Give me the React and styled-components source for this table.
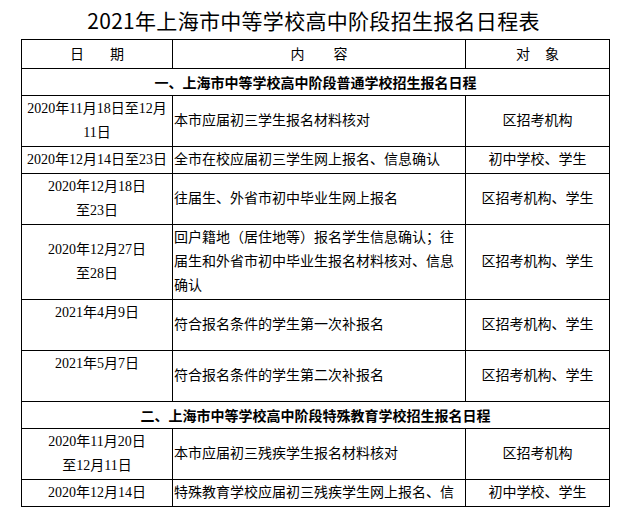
import React from "react";
import styled, { createGlobalStyle } from "styled-components";

const Global = createGlobalStyle`
  html, body { margin: 0; padding: 0; background: #fff; }
  body {
    font-family: "Liberation Serif", "Noto Sans CJK SC", serif;
    color: #000;
  }
`;

const Page = styled.div`
  width: 627px;
`;

const Title = styled.h1`
  margin: 0;
  height: 39px;
  line-height: 40px;
  text-align: center;
  font-family: "Noto Sans CJK SC", sans-serif;
  font-weight: 400;
  font-size: 21px;
  letter-spacing: 0.3px;
  color: #000;
`;

const Table = styled.table`
  margin-left: 21px;
  width: 589px;
  border-collapse: collapse;
  table-layout: fixed;
`;

const Cell = styled.td`
  border: 1px solid #000;
  padding: 1px 1px;
  font-size: 14px;
  line-height: 24px;
  color: #000;
  text-align: ${(p) => p.$align || "left"};
  vertical-align: ${(p) => p.$valign || "middle"};
  font-weight: ${(p) => (p.$bold ? 700 : 400)};
  font-family: ${(p) =>
    p.$sans ? `"Noto Sans CJK SC", sans-serif` : `"Liberation Serif", "Noto Sans CJK SC", serif`};
`;

const HeadLabel = styled.span`
  display: inline-flex;
  gap: ${(p) => p.$gap}px;
  font-family: "Noto Sans CJK SC", sans-serif;
`;

const Line = styled.span`
  display: block;
`;

const section1 = [
  {
    date: ["2020年11月18日至12月", "11日"],
    content: "本市应届初三学生报名材料核对",
    target: "区招考机构",
  },
  {
    date: ["2020年12月14日至23日"],
    content: "全市在校应届初三学生网上报名、信息确认",
    target: "初中学校、学生",
  },
  {
    date: ["2020年12月18日", "至23日"],
    content: "往届生、外省市初中毕业生网上报名",
    target: "区招考机构、学生",
  },
  {
    date: ["2020年12月27日", "至28日"],
    content:
      "回户籍地（居住地等）报名学生信息确认；往届生和外省市初中毕业生报名材料核对、信息确认",
    target: "区招考机构、学生",
  },
  {
    date: ["2021年4月9日", "\u00a0"],
    top: true,
    content: "符合报名条件的学生第一次补报名",
    target: "区招考机构、学生",
  },
  {
    date: ["2021年5月7日", "\u00a0"],
    top: true,
    content: "符合报名条件的学生第二次补报名",
    target: "区招考机构、学生",
  },
];

const section2 = [
  {
    date: ["2020年11月20日", "至12月11日"],
    content: "本市应届初三残疾学生报名材料核对",
    target: "区招考机构",
  },
  {
    date: ["2020年12月14日"],
    content: "特殊教育学校应届初三残疾学生网上报名、信",
    target: "初中学校、学生",
  },
];

function Row({ r }) {
  return (
    <tr>
      <Cell $align="center" $valign={r.top ? "top" : "middle"}>
        {r.date.map((d, i) => (
          <Line key={i}>{d}</Line>
        ))}
      </Cell>
      <Cell>{r.content}</Cell>
      <Cell $align="center">{r.target}</Cell>
    </tr>
  );
}

export default function App() {
  return (
    <Page>
      <Global />
      <Title>2021年上海市中等学校高中阶段招生报名日程表</Title>
      <Table>
        <colgroup>
          <col style={{ width: 151 }} />
          <col style={{ width: 293 }} />
          <col style={{ width: 144 }} />
        </colgroup>
        <tbody>
          <tr>
            <Cell $align="center">
              <HeadLabel $gap={26}>
                <span>日</span>
                <span>期</span>
              </HeadLabel>
            </Cell>
            <Cell $align="center">
              <HeadLabel $gap={29}>
                <span>内</span>
                <span>容</span>
              </HeadLabel>
            </Cell>
            <Cell $align="center">
              <HeadLabel $gap={15}>
                <span>对</span>
                <span>象</span>
              </HeadLabel>
            </Cell>
          </tr>
          <tr>
            <Cell colSpan={3} $align="center" $bold $sans>
              一、上海市中等学校高中阶段普通学校招生报名日程
            </Cell>
          </tr>
          {section1.map((r, i) => (
            <Row key={i} r={r} />
          ))}
          <tr>
            <Cell colSpan={3} $align="center" $bold $sans>
              二、上海市中等学校高中阶段特殊教育学校招生报名日程
            </Cell>
          </tr>
          {section2.map((r, i) => (
            <Row key={i} r={r} />
          ))}
        </tbody>
      </Table>
    </Page>
  );
}
